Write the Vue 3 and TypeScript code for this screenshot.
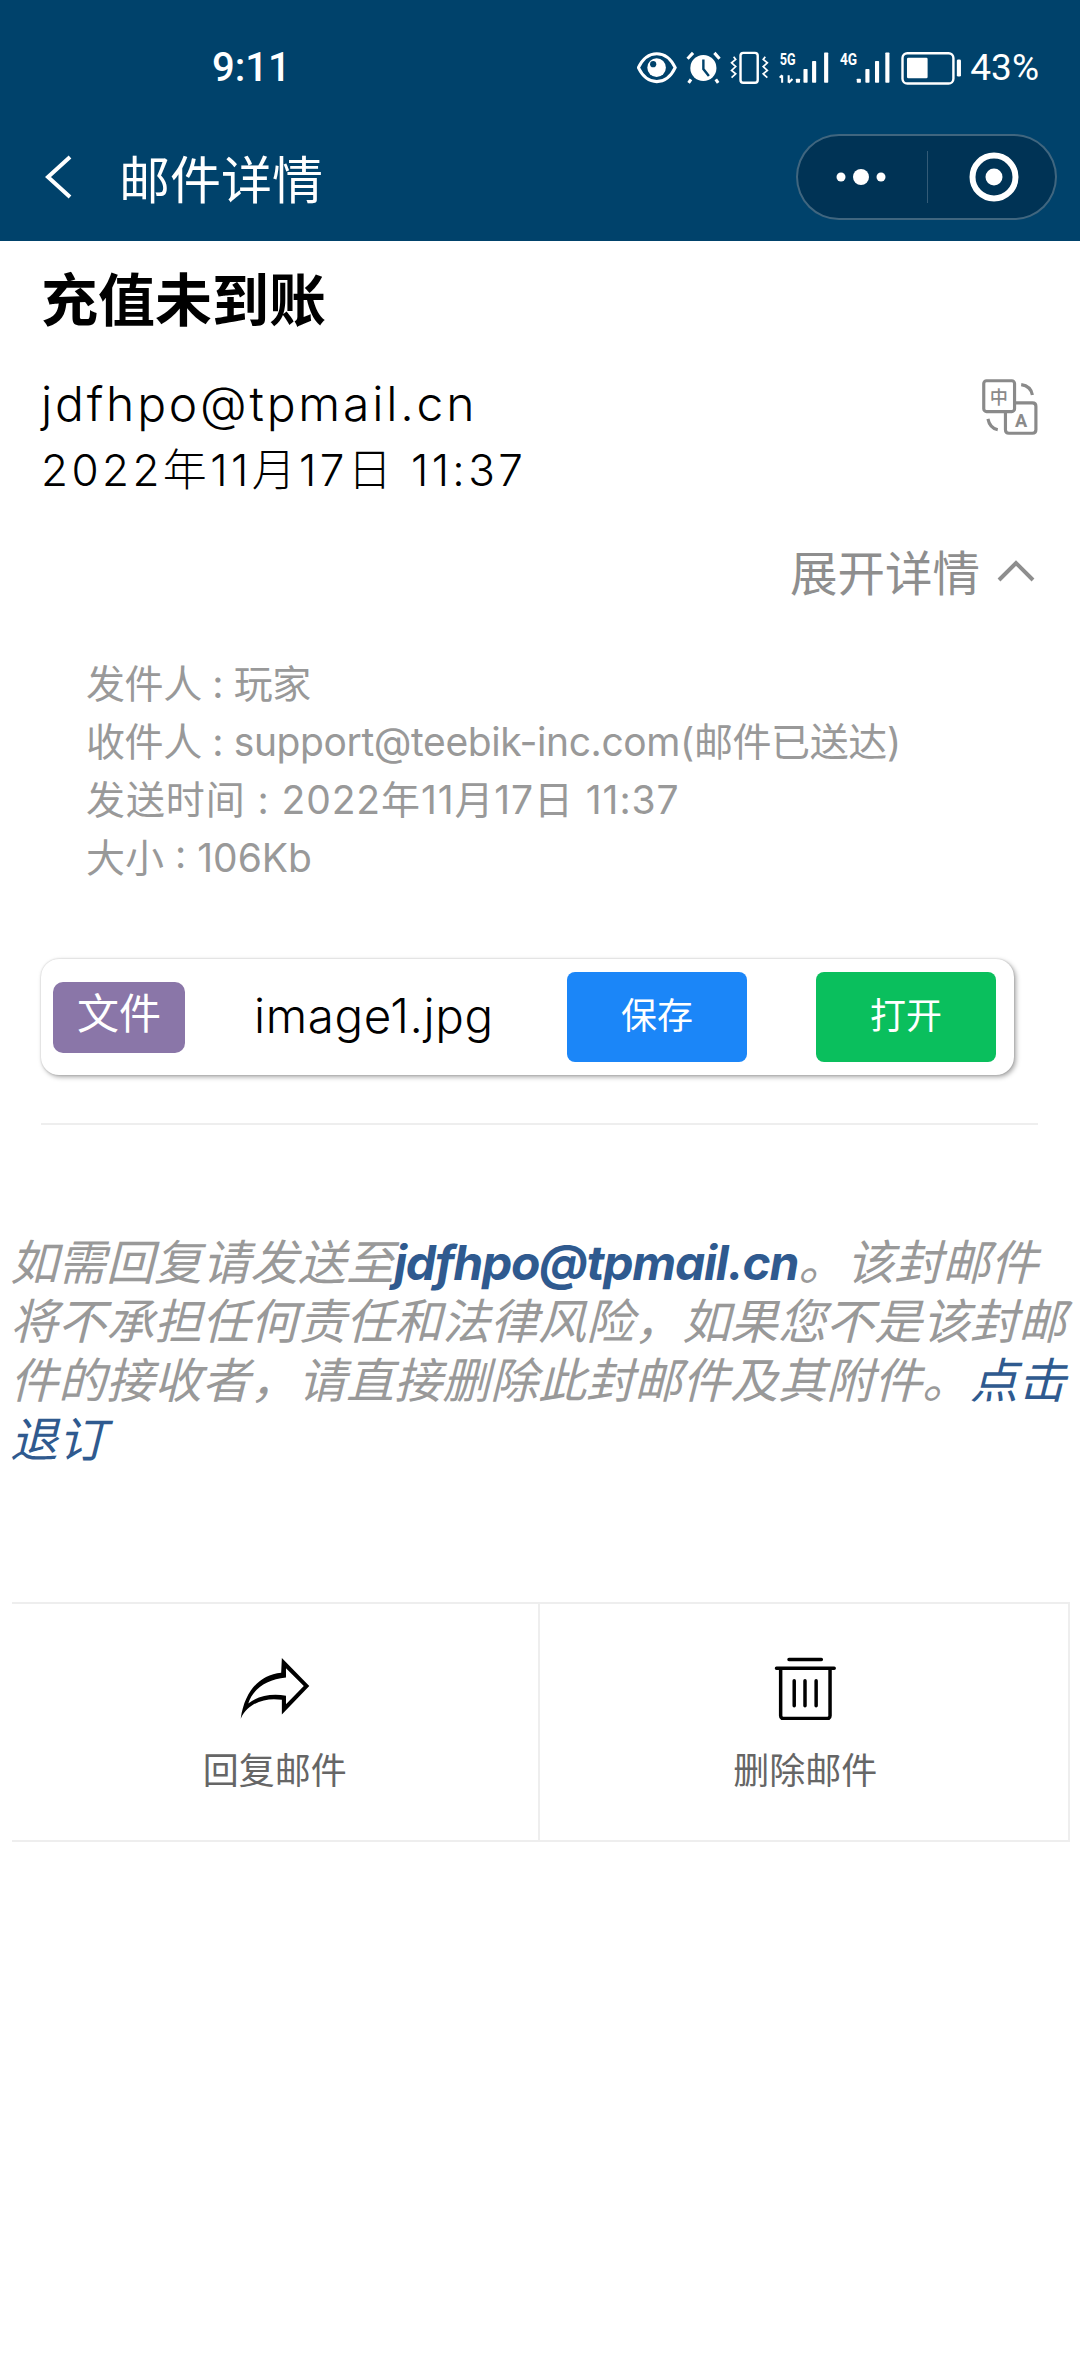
<script setup lang="ts">
const details: string[] = [
  '发件人 : 玩家',
  '收件人 : support@teebik-inc.com(邮件已送达)',
  '发送时间 : 2022年11月17日 11:37',
  '大小 : 106Kb',
]
</script>

<template>
  <div class="page">
    <header class="header">
      <div class="status">
        <span class="time">9:11</span>
        <div class="status-right">
          <svg class="status-icons" viewBox="275 150 945 110" fill="none" stroke="#fff">
            <path d="M279 204C305 150 360 150 386 204C360 258 305 258 279 204Z" stroke-width="9" />
            <circle cx="332" cy="204" r="27" fill="#fff" stroke="none" />
            <circle cx="322" cy="194" r="9" fill="#00426b" stroke="none" />
            <circle cx="468" cy="205" r="38" fill="#fff" stroke="none" />
            <path d="M468 180V208L484 228" stroke="#00426b" stroke-width="7" />
            <path d="M422 178L438 161M500 161L515 178M432 238L425 248M504 238L511 248" stroke-width="9" />
            <rect x="576" y="161" width="50" height="87" rx="8" stroke-width="7" />
            <path d="M556 172L562 180L550 190L562 201L550 212L562 222L550 233M648 172L642 180L654 190L642 201L654 212L642 222L654 233" stroke-width="5" />
            <text class="net" x="690" y="197" textLength="46" lengthAdjust="spacingAndGlyphs">5G</text>
            <path d="M697 248V226M690 233L697 226M716 226V248M716 248L727 237" stroke-width="6" />
            <rect x="737" y="236" width="12" height="12" rx="2" fill="#fff" stroke="none" />
            <rect x="759" y="208" width="12" height="40" rx="2" fill="#fff" stroke="none" />
            <rect x="784" y="185" width="12" height="63" rx="2" fill="#fff" stroke="none" />
            <rect x="819" y="160" width="12" height="88" rx="2" fill="#fff" stroke="none" />
            <text class="net" x="865" y="197" textLength="50" lengthAdjust="spacingAndGlyphs">4G</text>
            <rect x="914" y="236" width="12" height="12" rx="2" fill="#fff" stroke="none" />
            <rect x="939" y="208" width="12" height="40" rx="2" fill="#fff" stroke="none" />
            <rect x="967" y="185" width="12" height="63" rx="2" fill="#fff" stroke="none" />
            <rect x="997" y="160" width="12" height="88" rx="2" fill="#fff" stroke="none" />
            <rect x="1047" y="162" width="148" height="88" rx="14" stroke-width="7" />
            <rect x="1060" y="175" width="60" height="60" rx="4" fill="#fff" stroke="none" />
            <rect x="1205" y="180" width="12" height="50" rx="4" fill="#fff" stroke="none" />
          </svg>
          <span class="battery">43%</span>
        </div>
      </div>
      <div class="nav">
        <svg class="back" viewBox="0 0 28 44" fill="none" stroke="#fff" stroke-width="4">
          <path d="M25 2L3 22L25 42" />
        </svg>
        <span class="nav-title">邮件详情</span>
        <div class="capsule">
          <div class="capsule-part capsule-left">
            <svg width="50" height="20" viewBox="0 0 50 20" fill="#fff">
              <circle cx="5" cy="10" r="4.5" />
              <circle cx="25" cy="10" r="8" />
              <circle cx="45" cy="10" r="4.5" />
            </svg>
          </div>
          <div class="capsule-part capsule-right">
            <svg width="50" height="50" viewBox="0 0 50 50" fill="none">
              <circle cx="25" cy="25" r="21.5" stroke="#fff" stroke-width="6" />
              <circle cx="25" cy="25" r="8.5" fill="#fff" />
            </svg>
          </div>
        </div>
      </div>
    </header>

    <main>
      <h1 class="subject">充值未到账</h1>

      <div class="meta">
        <div>
          <div class="sender">jdfhpo@tpmail.cn</div>
          <div class="date">2022年11月17日 11:37</div>
        </div>
        <svg class="translate" viewBox="848 120 160 160" fill="none" stroke="#8a8a8a" stroke-width="9">
          <rect x="853" y="125" width="88" height="88" rx="8" />
          <path d="M941 188H992Q1002 188 1002 198V265Q1002 275 992 275H925Q915 275 915 265V213" />
          <path d="M960 136Q988 140 992 166M865 234Q870 260 893 265" />
          <text class="tr-text" x="896" y="190" text-anchor="middle">中</text>
          <text class="tr-text tr-a" x="960" y="256" text-anchor="middle">A</text>
        </svg>
      </div>

      <div class="toggle">
        <span>展开详情</span>
        <svg width="38" height="22" viewBox="0 0 38 22" fill="none" stroke="#8e8e8e" stroke-width="4">
          <path d="M2 20L19 3L36 20" />
        </svg>
      </div>

      <div class="details">
        <div v-for="line in details" :key="line">{{ line }}</div>
      </div>

      <div class="attachment">
        <span class="tag">文件</span>
        <span class="filename">image1.jpg</span>
        <button class="btn btn-save">保存</button>
        <button class="btn btn-open">打开</button>
      </div>

      <div class="rule"></div>

      <p class="notice">如需回复请发送至<b class="link">jdfhpo@tpmail.cn</b>。该封邮件将不承担任何责任和法律风险，如果您不是该封邮件的接收者，请直接删除此封邮件及其附件。<span class="link-plain">点击退订</span></p>

      <div class="actions">
        <div class="action action-left">
          <svg class="action-icon" viewBox="695 170 210 185" fill="#000">
            <path fill-rule="evenodd" d="M700 352C712 270 755 225 818 218L820 175L900 257L820 340L820 297C780 290 725 300 700 352ZM722 308C750 285 790 278 832 285L832 310L884 257L832 205L832 232C775 238 735 265 722 308Z" />
          </svg>
          <span>回复邮件</span>
        </div>
        <div class="action action-right">
          <svg class="action-icon" viewBox="678 172 180 184" fill="none" stroke="#000" stroke-width="10" stroke-linecap="round">
            <path d="M722 182H815M686 207H852M698 207V344Q698 352 706 352H832Q840 352 840 344V207M737 243V315M768 243V315M800 243V315" />
          </svg>
          <span>删除邮件</span>
        </div>
      </div>
    </main>
  </div>
</template>

<style scoped>
.page {
  width: 1080px;
  height: 2376px;
  background: #fff;
  font-family: "Noto Sans CJK SC", sans-serif;
  overflow: hidden;
}
.header {
  height: 241px;
  background: #00426b;
  color: #fff;
}
.status {
  height: 123px;
  padding: 12px 41px 0 212px;
  display: flex;
  justify-content: space-between;
  align-items: center;
  box-sizing: border-box;
}
.time {
  font-family: Roboto, sans-serif;
  font-size: 40px;
  font-weight: 500;
}
.status-right {
  display: flex;
  align-items: center;
  gap: 8px;
}
.status-icons {
  width: 325px;
  height: 38px;
}
.net {
  font-family: Roboto, sans-serif;
  font-size: 48px;
  font-weight: 700;
  fill: #fff;
  stroke: none;
}
.battery {
  font-family: Roboto, sans-serif;
  font-size: 37px;
}
.nav {
  height: 107px;
  display: flex;
  align-items: center;
  padding: 0 23px 0 45px;
}
.back {
  width: 28px;
  height: 44px;
}
.nav-title {
  margin-left: 46px;
  font-size: 51px;
  flex: 1;
}
.capsule {
  width: 261px;
  height: 86px;
  box-sizing: border-box;
  display: flex;
  align-items: center;
  background: #003355;
  border: 2px solid rgba(255, 255, 255, 0.25);
  border-radius: 43px;
}
.capsule-part {
  display: flex;
  align-items: center;
  justify-content: center;
}
.capsule-left {
  flex: 0 0 129px;
  box-sizing: border-box;
  padding-right: 3px;
}
.capsule-right {
  flex: 1;
  border-left: 1px solid rgba(255, 255, 255, 0.2);
  height: 52px;
  padding-left: 5px;
}
.subject {
  margin: 0;
  padding: 17px 0 0 41px;
  font-size: 57px;
  line-height: 76px;
  font-weight: 700;
  color: #000;
}
.meta {
  display: flex;
  justify-content: space-between;
  align-items: flex-start;
  padding: 39px 42px 0 41px;
}
.sender {
  font-family: Inter, "Noto Sans CJK SC", sans-serif;
  font-size: 48px;
  line-height: 62px;
  letter-spacing: 2.8px;
  font-weight: 300;
  color: #000;
}
.date {
  margin-top: 4px;
  font-family: Inter, "Noto Sans CJK SC", sans-serif;
  font-size: 44px;
  line-height: 62px;
  letter-spacing: 3.4px;
  font-weight: 300;
  color: #000;
}
.translate {
  width: 56px;
  height: 56px;
  margin-top: 6px;
}
.tr-text {
  font-size: 52px;
  fill: #8a8a8a;
  stroke: none;
  font-weight: 500;
}
.tr-a {
  font-family: Roboto, sans-serif;
  font-weight: 700;
}
.toggle {
  display: flex;
  justify-content: flex-end;
  align-items: center;
  gap: 17px;
  padding: 35px 45px 0 0;
  height: 70px;
  font-size: 47.5px;
  color: #8e8e8e;
  line-height: 70px;
}
.details {
  padding: 49px 0 0 86px;
  font-family: Inter, "Noto Sans CJK SC", sans-serif;
  font-size: 39px;
  line-height: 58px;
  letter-spacing: -0.4px;
  color: #999;
}
.details div:nth-child(3) {
  letter-spacing: 0.9px;
}
.details div:nth-child(4) {
  letter-spacing: 0;
}
.attachment {
  margin: 72px 0 0 41px;
  width: 973px;
  height: 116px;
  box-sizing: border-box;
  display: flex;
  align-items: center;
  padding-left: 12px;
  background: #fff;
  border-radius: 18px;
  box-shadow: 2px 2px 5px rgba(0, 0, 0, 0.35), 0 0 2px rgba(0, 0, 0, 0.2);
}
.tag {
  width: 132px;
  height: 71px;
  background: #8a76a8;
  color: #fff;
  border-radius: 10px;
  font-size: 42px;
  line-height: 58px;
  text-align: center;
}
.filename {
  margin-left: 69px;
  width: 313px;
  font-family: Inter, sans-serif;
  font-size: 47.5px;
  letter-spacing: 0.6px;
  font-weight: 300;
  color: #000;
  line-height: 60px;
  padding-bottom: 3px;
}
.btn {
  width: 180px;
  height: 90px;
  border: 0;
  border-radius: 8px;
  color: #fff;
  font-family: inherit;
  font-size: 36px;
  padding: 0 0 9px;
}
.btn-save {
  background: #1b86f8;
}
.btn-open {
  margin-left: 69px;
  background: #0abf5d;
}
.rule {
  margin: 48px 42px 0 41px;
  height: 2px;
  background: #eee;
}
.notice {
  margin: 108px 10px 0 10px;
  font-family: Inter, "Noto Sans CJK SC", sans-serif;
  font-size: 48px;
  line-height: 59px;
  font-style: italic;
  color: #999;
}
.link {
  color: #2f5a8f;
  font-weight: 700;
  letter-spacing: -1.2px;
}
.link-plain {
  color: #2f5a8f;
}
.actions {
  margin: 133px 10px 0 12px;
  height: 240px;
  box-sizing: border-box;
  display: flex;
  border: 2px solid #eee;
  border-left: 0;
}
.action {
  flex: 1;
  display: flex;
  flex-direction: column;
  align-items: center;
  padding-top: 52px;
  font-size: 36px;
  color: #666;
}
.action-left {
  border-right: 2px solid #eee;
}
.action-right {
  padding-left: 3px;
}
.action-icon {
  width: 72px;
  height: 64px;
  margin-bottom: 22px;
}
</style>
